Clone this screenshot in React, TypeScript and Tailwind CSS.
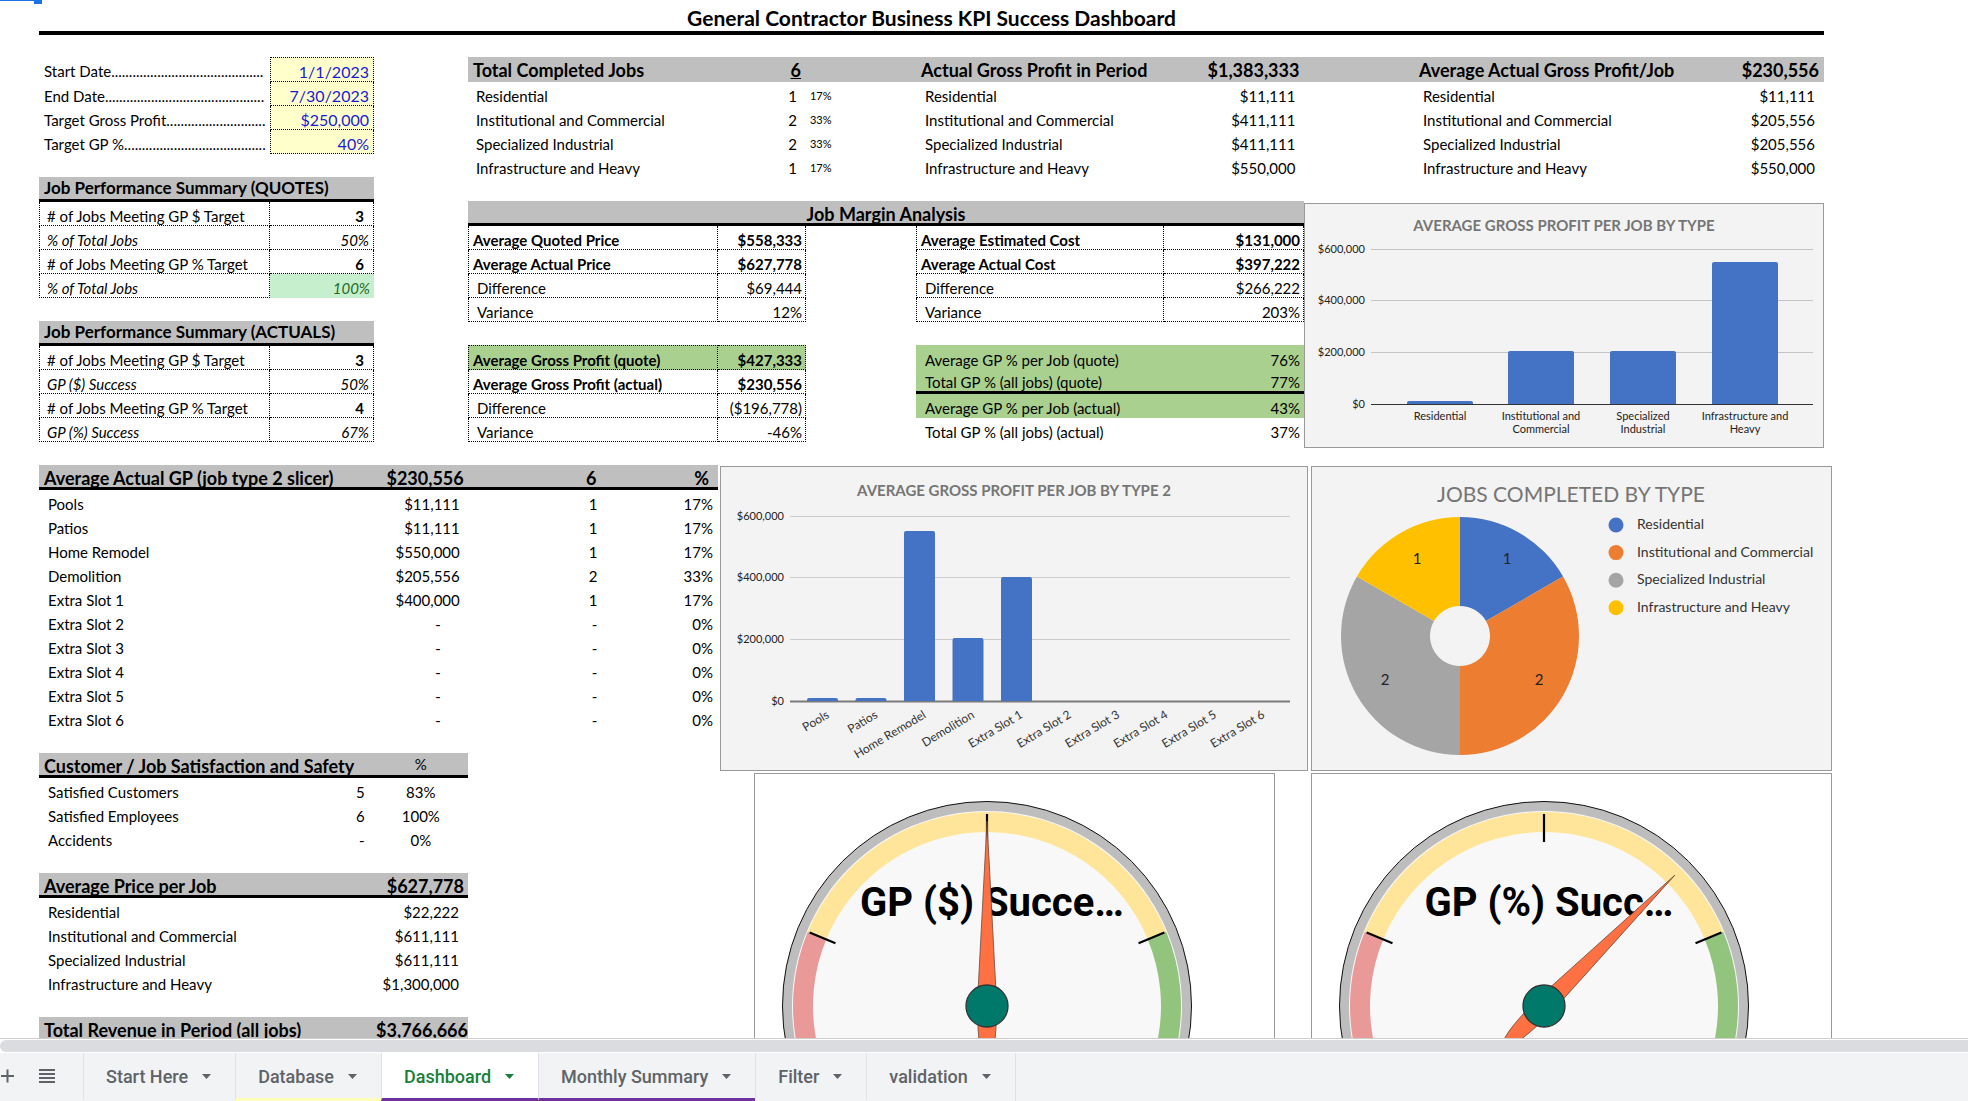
import type { ReactNode } from 'react';

/* ---------- shared cell styles ---------- */

const row = 'h-6 p-0 pt-[6px] align-top leading-4 whitespace-nowrap';
const head = 'h-[25px] p-0 pt-[5px] align-top text-lg leading-4 font-bold whitespace-nowrap bg-[#bfbfbf]';
const rule = 'border-b-[3px] border-black';
const dotted = 'border-b border-r border-dotted border-black';
const tableBase = 'w-full table-fixed border-separate border-spacing-0';

const jobTypes = ['Residential', 'Institutional and Commercial', 'Specialized Industrial', 'Infrastructure and Heavy'];

/* ---------- top left: parameters ---------- */

const parameters: { label: string; dots: number; value: string }[] = [
  { label: 'Start Date', dots: 43, value: '1/1/2023' },
  { label: 'End Date', dots: 45, value: '7/30/2023' },
  { label: 'Target Gross Profit', dots: 28, value: '$250,000' },
  { label: 'Target GP %', dots: 40, value: '40%' },
];

function Parameters() {
  return (
    <table className={tableBase}>
      <colgroup>
        <col className="w-[69%]" />
        <col />
      </colgroup>
      <tbody>
        {parameters.map((p, i) => (
          <tr key={p.label} className={i === 0 ? 'h-[25px]' : 'h-6'}>
            <th scope="row" className={`${row} pl-[5px] text-left font-normal`}>
              {p.label + '.'.repeat(p.dots)}
            </th>
            <td
              className={`${row} ${dotted} border-l bg-[#ffffcc] pr-1 text-right text-base leading-4 text-[#1a1ad6] ${i === 0 ? 'border-t' : ''}`}
            >
              {p.value}
            </td>
          </tr>
        ))}
      </tbody>
    </table>
  );
}

type SummaryRow = { label: string; value: string; rate?: boolean; good?: boolean };

function Summary({ title, rows }: { title: string; rows: SummaryRow[] }) {
  return (
    <table className={tableBase}>
      <colgroup>
        <col className="w-[69%]" />
        <col />
      </colgroup>
      <thead>
        <tr>
          <th
            colSpan={2}
            className="h-[25px] border-b-[3px] border-black bg-[#bfbfbf] p-0 pt-[3px] pl-[5px] text-left align-top text-[17px] leading-4 font-bold"
          >
            {title}
          </th>
        </tr>
      </thead>
      <tbody>
        {rows.map((r, i) => (
          <tr key={i} className={r.rate ? 'italic' : ''}>
            <th scope="row" className={`${row} ${dotted} border-l pl-[7px] text-left font-normal`}>
              {r.label}
            </th>
            <td
              className={`${row} text-right ${r.rate ? 'pr-1' : 'pr-[9px] font-bold'} ${r.good ? 'bg-[#c6efce] text-[#1e6b1e]' : dotted}`}
            >
              {r.value}
            </td>
          </tr>
        ))}
      </tbody>
    </table>
  );
}

/* ---------- top right: headline metrics ---------- */

function CompletedJobs() {
  const rows = [
    ['1', '17%'],
    ['2', '33%'],
    ['2', '33%'],
    ['1', '17%'],
  ];
  return (
    <table className={tableBase}>
      <colgroup>
        <col className="w-[60%]" />
        <col className="w-[15%]" />
        <col />
      </colgroup>
      <thead>
        <tr>
          <th className={`${head} pl-[5px] text-left`}>Total Completed Jobs</th>
          <th className={`${head} pr-[3px] text-right underline`}>6</th>
          <th className={head} />
        </tr>
      </thead>
      <tbody>
        {rows.map(([n, p], i) => (
          <tr key={jobTypes[i]}>
            <th scope="row" className={`${row} pl-2 text-left font-normal`}>{jobTypes[i]}</th>
            <td className={`${row} pr-[7px] text-right`}>{n}</td>
            <td className={`${row} pl-[6px] text-left text-[11px] leading-4`}>{p}</td>
          </tr>
        ))}
      </tbody>
    </table>
  );
}

function Metric({ title, total, values, gap }: { title: string; total: string; values: string[]; gap?: boolean }) {
  return (
    <table className={tableBase}>
      <colgroup>
        <col className={gap ? 'w-[50%]' : 'w-[64%]'} />
        <col />
        {gap && <col className="w-[22%]" />}
      </colgroup>
      <thead>
        <tr>
          <th className={`${head} pl-[5px] text-left`}>{title}</th>
          <th className={`${head} pr-[5px] text-right`}>{total}</th>
          {gap && <th className={head} />}
        </tr>
      </thead>
      <tbody>
        {values.map((v, i) => (
          <tr key={jobTypes[i]}>
            <th scope="row" className={`${row} pl-[9px] text-left font-normal`}>{jobTypes[i]}</th>
            <td className={`${row} pr-[9px] text-right`}>{v}</td>
            {gap && <td className={row} />}
          </tr>
        ))}
      </tbody>
    </table>
  );
}

/* ---------- job margin analysis ---------- */

type MarginRow = { label: string; value: string; bold?: boolean; green?: boolean };

function MarginTable({ rows, wide, top }: { rows: MarginRow[]; wide?: boolean; top?: boolean }) {
  return (
    <table className={tableBase}>
      <colgroup>
        <col className={wide ? 'w-[64%]' : 'w-[74%]'} />
        <col />
      </colgroup>
      <tbody>
        {rows.map((r, i) => {
          const tone = `${r.bold ? 'font-bold' : 'font-normal'} ${r.green ? 'bg-[#a9d08e]' : ''} ${top && i === 0 ? 'border-t' : ''}`;
          return (
            <tr key={r.label} className={top && i === 0 ? 'h-[25px]' : 'h-6'}>
              <th scope="row" className={`${row} ${dotted} border-l text-left ${r.bold ? 'pl-1' : 'pl-2'} ${tone}`}>
                {r.label}
              </th>
              <td className={`${row} ${dotted} pr-[3px] text-right ${tone}`}>{r.value}</td>
            </tr>
          );
        })}
      </tbody>
    </table>
  );
}

function GpPercentTable() {
  const rows = [
    ['Average GP % per Job (quote)', '76%', 'h-6 pt-[7px] bg-[#a9d08e]'],
    ['Total GP % (all jobs) (quote)', '77%', 'h-[25px] pt-[5px] bg-[#a9d08e] border-b-[3px] border-black'],
    ['Average GP % per Job (actual)', '43%', 'h-6 pt-[6px] bg-[#a9d08e]'],
    ['Total GP % (all jobs) (actual)', '37%', 'h-6 pt-[6px]'],
  ];
  return (
    <table className={tableBase}>
      <colgroup>
        <col className="w-[64%]" />
        <col />
      </colgroup>
      <tbody>
        {rows.map(([label, value, tone]) => (
          <tr key={label}>
            <th scope="row" className={`pl-[9px] text-left align-top leading-4 font-normal ${tone}`}>{label}</th>
            <td className={`pr-1 text-right align-top leading-4 ${tone}`}>{value}</td>
          </tr>
        ))}
      </tbody>
    </table>
  );
}

/* ---------- lower left tables ---------- */

const slicer = [
  ['Pools', '$11,111', '1', '17%'],
  ['Patios', '$11,111', '1', '17%'],
  ['Home Remodel', '$550,000', '1', '17%'],
  ['Demolition', '$205,556', '2', '33%'],
  ['Extra Slot 1', '$400,000', '1', '17%'],
  ['Extra Slot 2', '-', '-', '0%'],
  ['Extra Slot 3', '-', '-', '0%'],
  ['Extra Slot 4', '-', '-', '0%'],
  ['Extra Slot 5', '-', '-', '0%'],
  ['Extra Slot 6', '-', '-', '0%'],
];

function SlicerTable() {
  return (
    <table className={tableBase}>
      <colgroup>
        <col className="w-[49%]" />
        <col className="w-[14%]" />
        <col className="w-[21%]" />
        <col />
      </colgroup>
      <thead>
        <tr>
          <th className={`${head} ${rule} pl-[5px] text-left`}>Average Actual GP (job type 2 slicer)</th>
          <th className={`${head} ${rule} pr-[3px] text-right`}>$230,556</th>
          <th className={`${head} ${rule} pr-[13px] text-right`}>6</th>
          <th className={`${head} ${rule} pr-[9px] text-right`}>%</th>
        </tr>
      </thead>
      <tbody>
        {slicer.map(([name, gp, n, p]) => (
          <tr key={name}>
            <th scope="row" className={`${row} pl-[9px] text-left font-normal`}>{name}</th>
            <td className={`${row} text-right ${gp === '-' ? 'pr-[26px]' : 'pr-[7px]'}`}>{gp}</td>
            <td className={`${row} pr-3 text-right`}>{n}</td>
            <td className={`${row} pr-[5px] text-right`}>{p}</td>
          </tr>
        ))}
      </tbody>
    </table>
  );
}

function SatisfactionTable() {
  const rows = [
    ['Satisfied Customers', '5', '83%'],
    ['Satisfied Employees', '6', '100%'],
    ['Accidents', '-', '0%'],
  ];
  return (
    <table className={tableBase}>
      <colgroup>
        <col className="w-[60%]" />
        <col className="w-[18%]" />
        <col />
      </colgroup>
      <thead>
        <tr>
          <th colSpan={2} className={`${head} ${rule} pl-[5px] text-left`}>Customer / Job Satisfaction and Safety</th>
          <th className="h-[25px] border-b-[3px] border-black bg-[#bfbfbf] p-0 pt-[3px] text-center align-top leading-4 font-normal">%</th>
        </tr>
      </thead>
      <tbody>
        {rows.map(([name, n, p]) => (
          <tr key={name}>
            <th scope="row" className={`${row} pl-[9px] text-left font-normal`}>{name}</th>
            <td className={`${row} pr-[9px] text-right`}>{n}</td>
            <td className={`${row} text-center`}>{p}</td>
          </tr>
        ))}
      </tbody>
    </table>
  );
}

function PriceTable({ title, total, values, flush }: { title: string; total: string; values: string[]; flush?: boolean }) {
  return (
    <table className={tableBase}>
      <colgroup>
        <col className="w-[74%]" />
        <col />
      </colgroup>
      <thead>
        <tr>
          <th className={`${head} ${rule} pl-[5px] text-left`}>{title}</th>
          <th className={`${head} ${rule} text-right ${flush ? '' : 'pr-1'}`}>{total}</th>
        </tr>
      </thead>
      <tbody>
        {values.map((v, i) => (
          <tr key={jobTypes[i]}>
            <th scope="row" className={`${row} pl-[9px] text-left font-normal`}>{jobTypes[i]}</th>
            <td className={`${row} pr-[9px] text-right`}>{v}</td>
          </tr>
        ))}
      </tbody>
    </table>
  );
}

/* ---------- charts ---------- */

function Panel({ children, grey }: { children: ReactNode; grey?: boolean }) {
  return <div className={`outline -outline-offset-1 outline-[#999999] ${grey ? 'bg-[#f3f3f3]' : 'bg-white'}`}>{children}</div>;
}

function bar(x: number, y: number, w: number, base: number) {
  return `M${x} ${base}V${y + 2}q0 -2 2 -2H${x + w - 2}q2 0 2 2V${base}Z`;
}

function TypeChart() {
  const ticks = [
    ['$600,000', 46],
    ['$400,000', 97],
    ['$200,000', 149],
    ['$0', 201],
  ] as const;
  const bars = [
    { x: 103, y: 198, lines: ['Residential'] },
    { x: 204, y: 148, lines: ['Institutional and', 'Commercial'] },
    { x: 306, y: 148, lines: ['Specialized', 'Industrial'] },
    { x: 408, y: 59, lines: ['Infrastructure and', 'Heavy'] },
  ];
  return (
    <svg viewBox="0 0 520 245" className="block w-full" role="img" aria-label="Average gross profit per job by type">
      <text x="260" y="28" textAnchor="middle" fontSize="15" fontWeight="700" fill="#757575">
        AVERAGE GROSS PROFIT PER JOB BY TYPE
      </text>
      {ticks.map(([label, y], i) => (
        <g key={label}>
          <line x1="67" x2="509" y1={y + 0.5} y2={y + 0.5} stroke={i === 3 ? '#333333' : '#c4c4c4'} />
          <text x="61" y={y + 4} textAnchor="end" fontSize="11" fill="#222222">{label}</text>
        </g>
      ))}
      {bars.map((b) => (
        <g key={b.x}>
          <path d={bar(b.x, b.y, 66, 201)} fill="#4472c4" />
          {b.lines.map((l, i) => (
            <text key={l} x={b.x + 33} y={217 + i * 13} textAnchor="middle" fontSize="11" fill="#222222">{l}</text>
          ))}
        </g>
      ))}
    </svg>
  );
}

function SlotChart() {
  const ticks = [
    ['$600,000', 50],
    ['$400,000', 111],
    ['$200,000', 173],
    ['$0', 235],
  ] as const;
  const tops = [232, 232, 65, 172, 111];
  return (
    <svg viewBox="0 0 588 305" className="block w-full" role="img" aria-label="Average gross profit per job by type 2">
      <text x="294" y="30" textAnchor="middle" fontSize="15" fontWeight="700" fill="#757575">
        AVERAGE GROSS PROFIT PER JOB BY TYPE 2
      </text>
      {ticks.map(([label, y], i) => (
        <g key={label}>
          <line x1="70" x2="570" y1={y + 0.5} y2={y + 0.5} stroke={i === 3 ? '#7a7a7a' : '#cccccc'} strokeWidth={i === 3 ? 2 : 1} />
          <text x="64" y={y + 4} textAnchor="end" fontSize="11" fill="#222222">{label}</text>
        </g>
      ))}
      {tops.map((y, i) => (
        <path key={i} d={bar(87 + i * 48.5, y, 31, 235)} fill="#4472c4" />
      ))}
      {slicer.map(([name], i) => {
        const x = 110 + i * 48.4;
        return (
          <text key={name} x={x} y="251" textAnchor="end" fontSize="12" fill="#333333" transform={`rotate(-31 ${x} 251)`}>
            {name}
          </text>
        );
      })}
    </svg>
  );
}

function polar(cx: number, cy: number, r: number, deg: number) {
  const a = (deg * Math.PI) / 180;
  return `${(cx + r * Math.sin(a)).toFixed(2)} ${(cy - r * Math.cos(a)).toFixed(2)}`;
}

function ring(cx: number, cy: number, outer: number, inner: number, from: number, to: number) {
  const large = to - from > 180 ? 1 : 0;
  return `M${polar(cx, cy, outer, from)}A${outer} ${outer} 0 ${large} 1 ${polar(cx, cy, outer, to)}L${polar(cx, cy, inner, to)}A${inner} ${inner} 0 ${large} 0 ${polar(cx, cy, inner, from)}Z`;
}

function PieChart() {
  const slices = [
    { n: 1, from: 0, to: 60, color: '#4472c4', x: 196, y: 98 },
    { n: 2, from: 60, to: 180, color: '#ed7d31', x: 228, y: 219 },
    { n: 2, from: 180, to: 300, color: '#a5a5a5', x: 74, y: 219 },
    { n: 1, from: 300, to: 360, color: '#ffc000', x: 106, y: 98 },
  ];
  return (
    <svg viewBox="0 0 521 305" className="block w-full" role="img" aria-label="Jobs completed by type">
      <text x="260" y="36" textAnchor="middle" fontSize="21" fill="#757575">JOBS COMPLETED BY TYPE</text>
      {slices.map((s, i) => (
        <g key={i}>
          <path d={ring(149, 170, 119, 30, s.from, s.to)} fill={s.color} />
          <text x={s.x} y={s.y} textAnchor="middle" fontSize="15" fill="#222222">{s.n}</text>
          <circle cx="305" cy={59 + i * 27.6} r="7.5" fill={s.color} />
          <text x="326" y={63 + i * 27.6} fontSize="14" fill="#333333">{jobTypes[i]}</text>
        </g>
      ))}
    </svg>
  );
}

function Gauge({ label, angle }: { label: string; angle: number }) {
  const cx = 233;
  const cy = 233;
  return (
    <svg viewBox="0 0 521 460" className="block w-full" role="img" aria-label={label}>
      <circle cx={cx} cy={cy} r="204.5" fill="#bdbdbd" stroke="#111111" />
      <circle cx={cx} cy={cy} r="195" fill="#f8f8f8" />
      <path d={ring(cx, cy, 194, 174, -135, -67.5)} fill="#ea9999" />
      <path d={ring(cx, cy, 194, 174, -67.5, 67.5)} fill="#ffe599" />
      <path d={ring(cx, cy, 194, 174, 67.5, 135)} fill="#93c47d" />
      {[-67.5, 0, 67.5].map((a) => (
        <path key={a} d={`M${polar(cx, cy, 192, a)}L${polar(cx, cy, 164, a)}`} stroke="#000000" strokeWidth="2.2" />
      ))}
      <text x={cx + 5} y="143" textAnchor="middle" fontFamily="Roboto, sans-serif" fontSize="40" fontWeight="700" fill="#000000">
        {label}
      </text>
      <path
        transform={`translate(${cx} ${cy}) rotate(${angle})`}
        d="M0 -185L8.7 -20C9.8 0 9.8 20 7.6 38C6 50 3 58 0 60C-3 58 -6 50 -7.6 38C-9.8 20 -9.8 0 -8.7 -20Z"
        fill="#ff7043"
        stroke="#6b4a3a"
        strokeWidth="0.8"
      />
      <circle cx={cx} cy={cy} r="21" fill="#00796b" stroke="#333333" strokeWidth="1.3" />
    </svg>
  );
}

/* ---------- sheet tabs ---------- */

const tabs = [
  { name: 'Start Here', line: '' },
  { name: 'Database', line: 'border-b-[#ffffb8]' },
  { name: 'Dashboard', line: 'border-b-[#7030a0]', active: true },
  { name: 'Monthly Summary', line: 'border-b-[#7030a0]' },
  { name: 'Filter', line: '' },
  { name: 'validation', line: '' },
];

function TabBar() {
  return (
    <nav aria-label="Sheets" className="flex h-12 shrink-0 bg-[#f1f3f4] font-[Roboto,sans-serif] text-lg leading-6 font-medium text-[#5f6368]">
      <div className="flex w-[83px] shrink-0 items-center text-[#5f6368]">
        <button type="button" aria-label="Add sheet" className="pb-[2px]">
          <svg width="14" height="14" viewBox="0 0 14 14">
            <path d="M1 7H14M7.5 0.5V13.5" stroke="currentColor" strokeWidth="2" />
          </svg>
        </button>
        <button type="button" aria-label="All sheets" className="ml-[25px] pb-[2px]">
          <svg width="16" height="14" viewBox="0 0 16 14" fill="currentColor">
            <path d="M0 0H16V2H0ZM0 4H16V6H0ZM0 8H16V10H0ZM0 12H16V14H0Z" />
          </svg>
        </button>
      </div>
      {tabs.map((t) => (
        <button
          key={t.name}
          type="button"
          aria-current={t.active ? 'page' : undefined}
          className={`flex items-center gap-[14px] border-b-[3px] border-l border-l-[#e0e2e5] pt-[2px] pr-6 pl-[22px] whitespace-nowrap ${t.line || 'border-b-transparent'} ${t.active ? 'bg-white text-[#188038]' : ''}`}
        >
          {t.name}
          <svg width="9" height="5" viewBox="0 0 9 5" fill="currentColor">
            <path d="M0 0H9L4.5 5Z" />
          </svg>
        </button>
      ))}
      <div className="border-l border-[#e0e2e5]" />
    </nav>
  );
}

/* ---------- page ---------- */

export default function App() {
  return (
    <div className="flex h-screen flex-col overflow-hidden bg-white font-[Lato,sans-serif] text-[15px] text-black">
      <main className="relative min-h-0 flex-1 overflow-hidden pl-[39px]">
        <div className="absolute top-0 left-0 h-px w-[34px] bg-[#1a73e8]" />
        <div className="absolute top-0 left-[34px] h-1 w-2 bg-[#1a73e8]" />

        <div className="pr-[144px]">
          <h1 className="h-[35px] border-b-4 border-black pt-[7px] text-center text-[21px] leading-[22px] font-bold">
            General Contractor Business KPI Success Dashboard
          </h1>

          <div className="mt-[22px] grid grid-cols-[335fr_94fr_1356fr]">
            <div className="flex flex-col gap-[23px]">
              <Parameters />
              <Summary
                title="Job Performance Summary (QUOTES)"
                rows={[
                  { label: '# of Jobs Meeting GP $ Target', value: '3' },
                  { label: '% of Total Jobs', value: '50%', rate: true },
                  { label: '# of Jobs Meeting GP % Target', value: '6' },
                  { label: '% of Total Jobs', value: '100%', rate: true, good: true },
                ]}
              />
              <Summary
                title="Job Performance Summary (ACTUALS)"
                rows={[
                  { label: '# of Jobs Meeting GP $ Target', value: '3' },
                  { label: 'GP ($) Success', value: '50%', rate: true },
                  { label: '# of Jobs Meeting GP % Target', value: '4' },
                  { label: 'GP (%) Success', value: '67%', rate: true },
                ]}
              />
            </div>
            <div />
            <div className="flex flex-col gap-[23px]">
              <div className="grid grid-cols-[448fr_498fr_410fr]">
                <CompletedJobs />
                <Metric
                  title="Actual Gross Profit in Period"
                  total="$1,383,333"
                  values={['$11,111', '$411,111', '$411,111', '$550,000']}
                  gap
                />
                <Metric
                  title="Average Actual Gross Profit/Job"
                  total="$230,556"
                  values={['$11,111', '$205,556', '$205,556', '$550,000']}
                />
              </div>
              <div className="grid grid-cols-[836fr_520fr] items-start">
                <section>
                  <h2 className={`${head} ${rule} text-center`}>Job Margin Analysis</h2>
                  <div className="grid grid-cols-[338fr_110fr_388fr] gap-y-[23px]">
                    <MarginTable
                      rows={[
                        { label: 'Average Quoted Price', value: '$558,333', bold: true },
                        { label: 'Average Actual Price', value: '$627,778', bold: true },
                        { label: 'Difference', value: '$69,444' },
                        { label: 'Variance', value: '12%' },
                      ]}
                    />
                    <div />
                    <MarginTable
                      wide
                      rows={[
                        { label: 'Average Estimated Cost', value: '$131,000', bold: true },
                        { label: 'Average Actual Cost', value: '$397,222', bold: true },
                        { label: 'Difference', value: '$266,222' },
                        { label: 'Variance', value: '203%' },
                      ]}
                    />
                    <MarginTable
                      top
                      rows={[
                        { label: 'Average Gross Profit (quote)', value: '$427,333', bold: true, green: true },
                        { label: 'Average Gross Profit (actual)', value: '$230,556', bold: true },
                        { label: 'Difference', value: '($196,778)' },
                        { label: 'Variance', value: '-46%' },
                      ]}
                    />
                    <div />
                    <GpPercentTable />
                  </div>
                </section>
                <div className="pt-[2px]">
                  <Panel grey>
                    <TypeChart />
                  </Panel>
                </div>
              </div>
            </div>
          </div>
        </div>

        <div className="mt-[17px] grid grid-cols-[679fr_2fr_1112fr] items-start pr-[136px]">
          <div className="flex flex-col gap-[23px]">
            <SlicerTable />
            <div className="mr-[250px] flex flex-col gap-[23px]">
              <SatisfactionTable />
              <PriceTable
                title="Average Price per Job"
                total="$627,778"
                values={['$22,222', '$611,111', '$611,111', '$1,300,000']}
              />
              <PriceTable title="Total Revenue in Period (all jobs)" total="$3,766,666" values={[]} flush />
            </div>
          </div>
          <div />
          <div className="flex flex-col gap-[2px] pt-px">
            <div className="grid grid-cols-[588fr_3fr_521fr]">
              <Panel grey>
                <SlotChart />
              </Panel>
              <div />
              <Panel grey>
                <PieChart />
              </Panel>
            </div>
            <div className="grid grid-cols-[34fr_521fr_36fr_521fr]">
              <div />
              <Panel>
                <Gauge label="GP ($) Succe…" angle={0} />
              </Panel>
              <div />
              <Panel>
                <Gauge label="GP (%) Succ…" angle={45} />
              </Panel>
            </div>
          </div>
        </div>
      </main>

      <div className="h-[15px] shrink-0 border-t border-[#cccccc] bg-white pt-px">
        <div className="h-3 rounded-l-full bg-[#dadce0]" />
      </div>
      <TabBar />
    </div>
  );
}
